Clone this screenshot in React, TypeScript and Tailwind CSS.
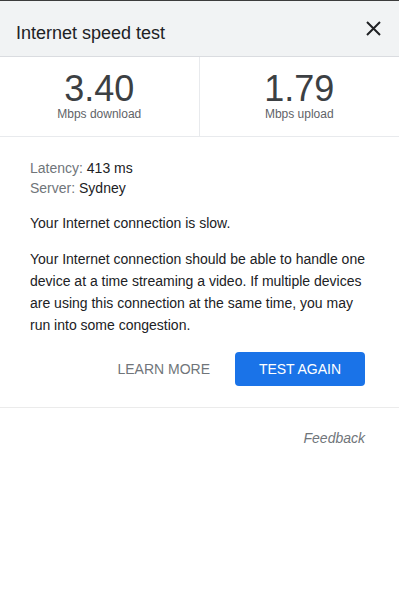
import React from "react";

export default function App() {
  return (
    <div className="w-[399px] h-[599px] bg-white border-t border-[#3c3c3c] overflow-hidden" style={{ fontFamily: '"Liberation Sans", Arial, sans-serif' }}>
      <div className="h-[56px] bg-[#f1f3f4] border-b border-[#dadce0] flex items-center justify-between pl-[16px] pr-[18px]">
        <div className="text-[18px] text-[#202124] mt-[9px]">Internet speed test</div>
        <svg width="15" height="15" viewBox="0 0 15 15" className="mt-[-1px]">
          <path d="M1 1 L14 14 M14 1 L1 14" stroke="#202124" strokeWidth="2" />
        </svg>
      </div>
      <div className="grid grid-cols-2 h-[80px] border-b border-[#e8eaed]">
        <div className="flex flex-col items-center border-r border-[#e8eaed] pt-[14px]">
          <div className="text-[36px] leading-[36px] text-[#3c4043]">3.40</div>
          <div className="text-[12px] leading-[14px] text-[#5f6368]">Mbps download</div>
        </div>
        <div className="flex flex-col items-center pt-[14px]">
          <div className="text-[36px] leading-[36px] text-[#3c4043]">1.79</div>
          <div className="text-[12px] leading-[14px] text-[#5f6368]">Mbps upload</div>
        </div>
      </div>
      <div className="pl-[30px] pr-[30px] pt-[21px] text-[14px] text-[#202124]">
        <div className="leading-[20px]"><span className="text-[#70757a]">Latency:</span> 413 ms</div>
        <div className="leading-[20px]"><span className="text-[#70757a]">Server:</span> Sydney</div>
        <div className="leading-[22px] mt-[14px]">Your Internet connection is slow.</div>
        <div className="leading-[22px] mt-[14px] pr-[2px]">
          Your Internet connection should be able to handle one device at a time streaming a video. If multiple devices are using this connection at the same time, you may run into some congestion.
        </div>
        <div className="flex justify-end items-center gap-[17px] mt-[16px] pr-[4px]">
          <button className="h-[34px] px-[8px] text-[14px] text-[#70757a]">LEARN MORE</button>
          <button className="h-[34px] w-[130px] rounded-[4px] bg-[#1a73e8] text-white text-[14px]">TEST AGAIN</button>
        </div>
      </div>
      <div className="mt-[21px] border-t border-[#ebebeb]" />
      <div className="flex justify-end pr-[34px] pt-[20px]">
        <span className="italic text-[14px] text-[#70757a]">Feedback</span>
      </div>
    </div>
  );
}
